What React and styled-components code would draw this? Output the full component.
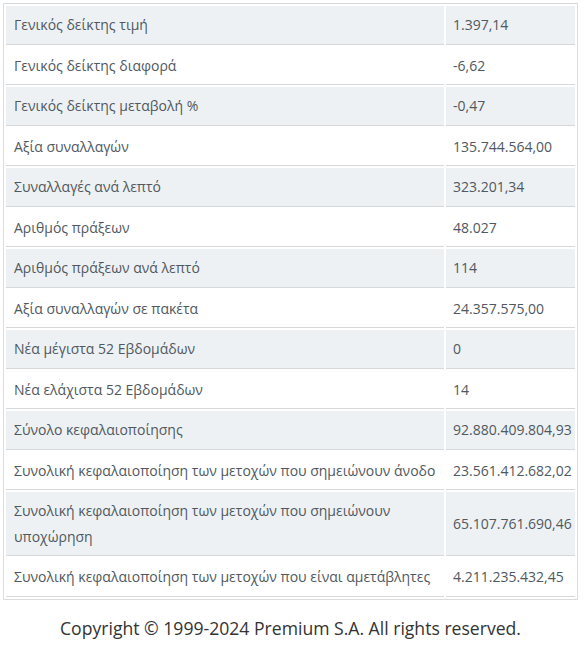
import React from 'react'
import styled, { createGlobalStyle } from 'styled-components';

const GlobalStyle = createGlobalStyle`
body {
  margin: 0;
  background: #fff;
  font-family: "Open Sans", "Liberation Sans", sans-serif;
}
`;

const Page = styled.div`
padding: 3px 8px 0 3px;
`;

const Wrapper = styled.div`
border: 1px solid #dcdcdc;
border-top: none;
`;

const Table = styled.table`
width: 100%;
table-layout: fixed;
border-collapse: separate;
border-spacing: 2px;
border-top: 1px solid #d6d9dc;
font-size: 14px;
color: #505860;
`;

const Cell = styled.td`
padding: 6px 6px 6px 8px;
line-height: 25.5px;
border-bottom: 1px solid #d6d9dc;
background: ${props => (props.$shaded ? '#edf1f4' : '#fff')};
width: ${props => (props.$value ? '116px' : 'auto')};
padding-left: ${props => (props.$value ? '7px' : '8px')};
vertical-align: middle;
`;

const Footer = styled.footer`
text-align: center;
font-size: 17.6px;
color: #333;
padding: 16px 0 0;
`;

const rows = [
    ['Γενικός δείκτης τιμή', '1.397,14'],
    ['Γενικός δείκτης διαφορά', '-6,62'],
    ['Γενικός δείκτης μεταβολή %', '-0,47'],
    ['Αξία συναλλαγών', '135.744.564,00'],
    ['Συναλλαγές ανά λεπτό', '323.201,34'],
    ['Αριθμός πράξεων', '48.027'],
    ['Αριθμός πράξεων ανά λεπτό', '114'],
    ['Αξία συναλλαγών σε πακέτα', '24.357.575,00'],
    ['Νέα μέγιστα 52 Εβδομάδων', '0'],
    ['Νέα ελάχιστα 52 Εβδομάδων', '14'],
    ['Σύνολο κεφαλαιοποίησης', '92.880.409.804,93'],
    ['Συνολική κεφαλαιοποίηση των μετοχών που σημειώνουν άνοδο', '23.561.412.682,02'],
    ['Συνολική κεφαλαιοποίηση των μετοχών που σημειώνουν υποχώρηση', '65.107.761.690,46'],
    ['Συνολική κεφαλαιοποίηση των μετοχών που είναι αμετάβλητες', '4.211.235.432,45'],
];

export default function App() {
    return (
        <Page>
            <GlobalStyle />
            <Wrapper>
                <Table>
                    <tbody>
                        {rows.map(([label, value], i) => (
                            <tr key={label}>
                                <Cell $shaded={i % 2 === 0}>{label}</Cell>
                                <Cell $shaded={i % 2 === 0} $value>{value}</Cell>
                            </tr>
                        ))}
                    </tbody>
                </Table>
            </Wrapper>
            <Footer>Copyright © 1999-2024 Premium S.A. All rights reserved.</Footer>
        </Page>
    )
}
